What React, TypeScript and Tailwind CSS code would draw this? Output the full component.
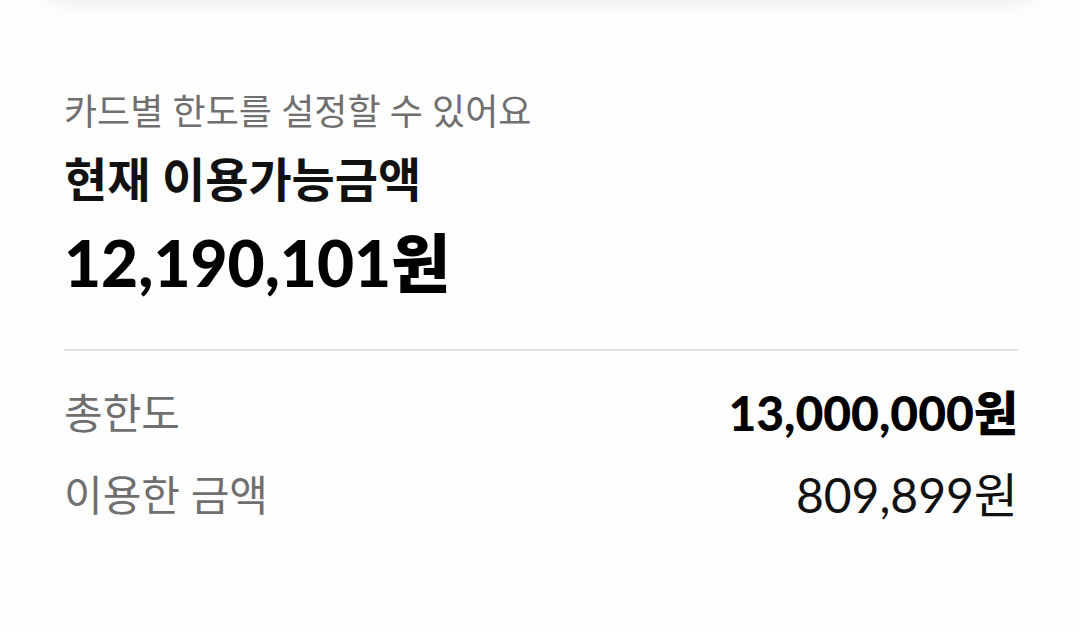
export default function App() {
  return (
    <div className="min-h-[631px] bg-[#fefefe] overflow-hidden font-['Lato','Noto_Sans_CJK_KR',sans-serif]">
      {/* bottom edge of the card above */}
      <div className="mx-[40px] -mt-[60px] h-[60px] rounded-[32px] bg-white shadow-[0_6px_18px_rgba(0,0,0,0.06)]" />

      <div className="pl-[64px] pr-[62px] pt-[87px]">
        <p className="text-[36px] leading-[48px] text-[#6f6f6f]">
          카드별 한도를 설정할 수 있어요
        </p>
        <h2 className="mt-4 text-[47px] leading-[56px] font-bold text-[#111111]">
          현재 이용가능금액
        </h2>
        <p className="mt-[16px] text-[64px] leading-[80px] font-black text-black">
          12,190,101원
        </p>

        <div className="mt-[46px] h-[2px] bg-[#e4e4e4]" />

        <div className="mt-[34px] flex items-center justify-between h-[56px]">
          <span className="text-[42px] text-[#6f6f6f]">총한도</span>
          <span className="text-[48px] font-black text-black">13,000,000원</span>
        </div>
        <div className="mt-[26px] flex items-center justify-between h-[56px]">
          <span className="text-[42px] text-[#6f6f6f]">이용한 금액</span>
          <span className="text-[48px] text-[#111111]">809,899원</span>
        </div>
      </div>
    </div>
  );
}
